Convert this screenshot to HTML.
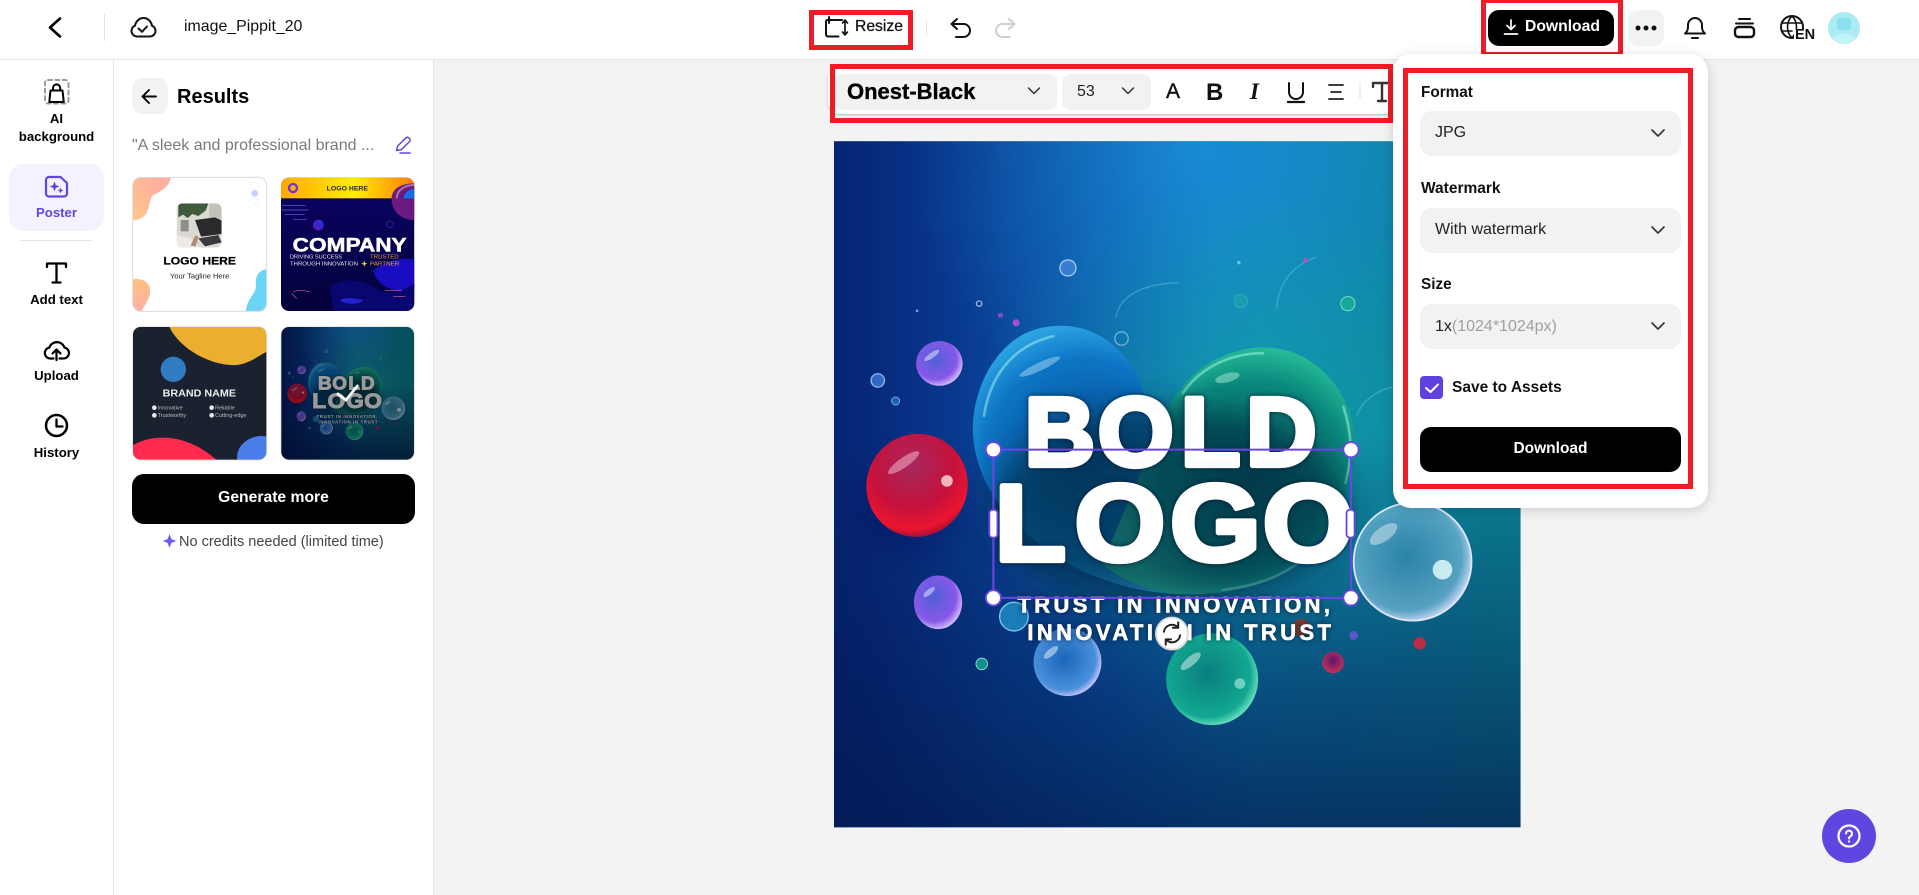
<!DOCTYPE html>
<html lang="en"><head><meta charset="utf-8"><title>image_Pippit_20</title>
<style>
html,body{margin:0;padding:0;width:1919px;height:895px;overflow:hidden;background:#f3f3f3;font-family:"Liberation Sans",sans-serif;color:#000}
.a{position:absolute}
.t{position:absolute;white-space:nowrap;line-height:20px;height:20px}
.c{text-align:center}
.b{font-weight:700}
svg{position:absolute;overflow:visible}
.sel{position:absolute;background:#f2f2f2;border-radius:12px}
.red{position:absolute;border:5px solid #ee1c25;box-sizing:border-box}
</style></head><body>

<!-- top bar -->
<div class="a" style="left:0;top:0;width:1919px;height:59px;background:#fff;border-bottom:1px solid #e4e4e4"></div>
<div class="a" style="left:0;top:60px;width:113px;height:835px;background:#fff;border-right:1px solid #e6e6e6"></div>
<div class="a" style="left:114px;top:60px;width:319px;height:835px;background:#fff;border-right:1px solid #e6e6e6"></div>

<div class="a" style="left:104px;top:14px;width:1px;height:27px;background:#e4e4e4"></div>
<div class="t" style="left:184px;top:17px;font-size:15.900px;color:#111">image_Pippit_20</div>
<div class="a" style="left:926px;top:20px;width:1px;height:15px;background:#e2e2e2"></div>

<div class="a" style="left:9px;top:164px;width:95px;height:67px;background:#f4f2fe;border-radius:14px"></div>

<svg style="left:0;top:0" width="1919" height="895" viewBox="0 0 1919 895" fill="none" stroke-linecap="round" stroke-linejoin="round">
  <!-- back -->
  <path d="M60 18.500 50 27.500 60 36.500" stroke="#000" stroke-width="2.600"/>
  <!-- cloud check -->
  <path d="M137 36.500a5.600 5.600 0 0 1-2-10.800c.8-4.300 4.200-7.700 8.500-7.700s7.700 3.400 8.500 7.700a5.600 5.600 0 0 1-2 10.800z" stroke="#111" stroke-width="2"/>
  <path d="M138.500 28.500l3.500 3.300 5-5.300" stroke="#111" stroke-width="2"/>
  <!-- AI bg -->
  <rect x="45" y="80" width="23.500" height="23.500" rx="3" stroke="#999" stroke-width="2" stroke-dasharray="4 3.400"/>
  <path d="M50.500 90.500h12l1.300 11.500H49.300z" stroke="#000" stroke-width="2"/>
  <path d="M53 90.500v-2.500a3.600 3.600 0 0 1 7.200 0v2.500" stroke="#000" stroke-width="2"/>
  <!-- poster -->
  <path d="M49 177h11.500l6.500 6v10.500a3 3 0 0 1-3 3H49a3 3 0 0 1-3-3V180a3 3 0 0 1 3-3z" stroke="#6046e0" stroke-width="2.200"/>
  <path d="M54.500 181.500l1.400 3.600 3.600 1.400-3.600 1.400-1.400 3.600-1.400-3.600-3.600-1.400 3.600-1.400z M60.500 187.500l.9 2.100 2.100.9-2.100.9-.9 2.100-.9-2.100-2.100-.9 2.100-.9z" fill="#6046e0"/>
  <!-- T -->
  <path d="M47 267v-3.500h19v3.500M56.500 263.500v19M52.500 282.500h8" stroke="#000" stroke-width="2.300"/>
  <!-- upload -->
  <path d="M50.500 358.500a5.500 5.500 0 0 1-1.200-10.900 8 8 0 0 1 15.200 0 5.500 5.500 0 0 1-.9 10.900M56.500 360v-10M52.500 353.500l4-4 4 4" stroke="#000" stroke-width="2.200"/>
  <path d="M50.500 358.500h3M59.500 358.500h3" stroke="#000" stroke-width="2.200"/>
  <!-- history -->
  <circle cx="56.500" cy="425.500" r="10.500" stroke="#000" stroke-width="2.500"/>
  <path d="M56.500 419.500v7h6" stroke="#000" stroke-width="2.300"/>
  <!-- results back arrow -->
  <rect x="132" y="78" width="36" height="36" rx="10" fill="#f2f2f2"/>
  <path d="M156 96.500h-13.500M149 90l-6.500 6.500 6.500 6.500" stroke="#000" stroke-width="1.900"/>
  <!-- edit -->
  <path d="M396.500 150.500l1.200-4.500 8-8c1.500-1.300 3-.3 3.600.3s1.300 2 .1 3.300l-8 8z" stroke="#6046e0" stroke-width="1.500"/>
  <path d="M400 153h10" stroke="#6046e0" stroke-width="1.500"/>
  <!-- star -->
  <path d="M169.500 534l1.800 5 5 2-5 2-1.800 5-1.800-5-5-2 5-2z" fill="#6a5cf5"/>
  <!-- resize -->
  <path d="M829 20h-1.500a1.500 1.500 0 0 0-1.500 1.500v13a2 2 0 0 0 2 2h10.500M829 17v6M829 20h13" stroke="#111" stroke-width="2"/>
  <path d="M845 21v13M842.500 23l2.500-3 2.500 3M842.500 32l2.500 3 2.500-3" stroke="#111" stroke-width="1.700"/>
  <!-- undo / redo -->
  <path d="M957 19l-5.500 5 5.500 5M952 24h11.500a6.500 6.500 0 0 1 0 13H956" stroke="#111" stroke-width="2"/>
  <path d="M1009 19l5.500 5-5.500 5M1014 24h-11.500a6.500 6.500 0 0 0 0 13h7.500" stroke="#cfcfcf" stroke-width="2"/>
</svg>

<!-- sidebar labels -->
<div class="a" style="left:20px;top:240px;width:72px;height:1px;background:#e4e4e4"></div>
<div class="t b c" style="left:0;width:113px;top:109px;font-size:13.200px">AI</div>
<div class="t b c" style="left:0;width:113px;top:127px;font-size:13.200px">background</div>
<div class="t b c" style="left:0;width:113px;top:203px;font-size:13.200px;color:#6046e0">Poster</div>
<div class="t b c" style="left:0;width:113px;top:290px;font-size:13.200px">Add text</div>
<div class="t b c" style="left:0;width:113px;top:366px;font-size:13.200px">Upload</div>
<div class="t b c" style="left:0;width:113px;top:443px;font-size:13.200px">History</div>

<!-- panel -->
<div class="t b" style="left:177px;top:87px;font-size:20px">Results</div>
<div class="t" style="left:132px;top:136px;font-size:16px;color:#7a7a7a">"A sleek and professional brand ...</div>

<!-- canvas -->
<svg style="left:830px;top:130px" width="700" height="700" viewBox="0 0 1568 1568" fill="none">
  <defs>
    <linearGradient id="bgL" x1="0" y1="0" x2="1" y2="0"><stop offset="0" stop-color="#0a359c"/><stop offset=".4" stop-color="#0c62b8"/><stop offset=".62" stop-color="#0e80b0"/><stop offset="1" stop-color="#0c8796"/></linearGradient>
    <linearGradient id="bgD" x1="0" y1="0" x2="0" y2="1"><stop offset=".42" stop-color="#031e50" stop-opacity="0"/><stop offset="1" stop-color="#031e50" stop-opacity=".78"/></linearGradient>
    <linearGradient id="bgE" x1="0" y1="0" x2="1" y2="0"><stop offset="0" stop-color="#02124e" stop-opacity=".5"/><stop offset=".25" stop-color="#02124e" stop-opacity=".2"/><stop offset=".55" stop-color="#02124e" stop-opacity="0"/></linearGradient>
    <radialGradient id="bgT" gradientUnits="userSpaceOnUse" cx="800" cy="30" r="640"><stop offset="0" stop-color="#1c90de" stop-opacity=".85"/><stop offset="1" stop-color="#1c90de" stop-opacity="0"/></radialGradient>
    <radialGradient id="bgC" gradientUnits="userSpaceOnUse" cx="900" cy="720" r="600"><stop offset="0" stop-color="#14b0a4" stop-opacity=".65"/><stop offset="1" stop-color="#14b0a4" stop-opacity="0"/></radialGradient>
    <radialGradient id="hB" gradientUnits="userSpaceOnUse" cx="570" cy="740" r="330"><stop offset="0" stop-color="#044a8c"/><stop offset=".68" stop-color="#0c74c4"/><stop offset="1" stop-color="#34b0ec"/></radialGradient>
    <radialGradient id="hG" gradientUnits="userSpaceOnUse" cx="950" cy="780" r="320"><stop offset="0" stop-color="#04585a"/><stop offset=".68" stop-color="#0a8a7e"/><stop offset="1" stop-color="#2fcca0"/></radialGradient>
    <radialGradient id="rd" cx=".38" cy=".35" r=".72"><stop offset="0" stop-color="#a8285e"/><stop offset=".55" stop-color="#c4123c"/><stop offset=".85" stop-color="#ec1430"/><stop offset="1" stop-color="#8a1032"/></radialGradient>
    <radialGradient id="pu" cx=".42" cy=".4" r=".65"><stop offset="0" stop-color="#4f60d8"/><stop offset=".7" stop-color="#8858e8"/><stop offset="1" stop-color="#e0d0ff"/></radialGradient>
    <radialGradient id="gl" cx=".45" cy=".45" r=".58"><stop offset="0" stop-color="#358ab0" stop-opacity=".75"/><stop offset=".8" stop-color="#6ab0d0" stop-opacity=".8"/><stop offset="1" stop-color="#d8e0ff"/></radialGradient>
    <radialGradient id="tl" cx=".45" cy=".45" r=".58"><stop offset="0" stop-color="#0a7e80"/><stop offset=".8" stop-color="#12a890"/><stop offset="1" stop-color="#70e8c4"/></radialGradient>
    <radialGradient id="bl" cx=".45" cy=".45" r=".58"><stop offset="0" stop-color="#1a66b8"/><stop offset=".8" stop-color="#4a90dc"/><stop offset="1" stop-color="#d8c8ff"/></radialGradient>
    <radialGradient id="mr" cx=".5" cy=".4" r=".6"><stop offset="0" stop-color="#5a1a6a"/><stop offset="1" stop-color="#c8305a"/></radialGradient>
    <linearGradient id="tw" x1="0" y1="0" x2="0" y2="1"><stop offset=".75" stop-color="#fff"/><stop offset="1" stop-color="#d8d8d8"/></linearGradient>
    <filter id="sh" x="-30%" y="-30%" width="160%" height="160%"><feGaussianBlur stdDeviation="35"/></filter>
    <clipPath id="cvclip"><rect x="9" y="25" width="1538" height="1537"/></clipPath>
  </defs>
  <g clip-path="url(#cvclip)">
  <g id="bubs">
    <rect x="9" y="25" width="1538" height="1537" fill="url(#bgL)"/>
    <rect x="9" y="25" width="1538" height="1537" fill="url(#bgT)"/>
    <rect x="9" y="25" width="1538" height="1537" fill="url(#bgC)"/>
    <rect x="9" y="25" width="1538" height="1537" fill="url(#bgD)"/>
    <rect x="9" y="25" width="1538" height="1537" fill="url(#bgE)"/>
    <!-- faint outlines -->
    <path d="M640 420C650 370 700 345 780 342M1000 400C1005 340 1040 300 1090 285M1180 640C1190 610 1220 585 1262 575" stroke="#8fd8e8" stroke-opacity=".35" stroke-width="3"/>
    <!-- heart -->
    <path d="M700 580C660 470 570 425 480 442 390 455 320 560 320 670c2 120 80 210 180 280 90 60 200 90 300 90z" fill="url(#hB)"/>
    <path d="M755 630C800 530 900 480 990 488c100 8 180 102 185 202 5 110-55 210-145 290-70 50-160 60-230 60-70 0-150-30-190-70z" fill="url(#hG)"/>
    <path d="M345 640C360 540 420 480 500 462M790 590c40-60 110-90 180-90M1150 620c20 60 20 110 5 170M880 1030c90-10 160-40 210-100" stroke="#b8fff0" stroke-opacity=".45" stroke-width="6" stroke-linecap="round"/>
    <ellipse cx="470" cy="530" rx="50" ry="9" transform="rotate(-25 470 530)" fill="#cfefff" fill-opacity=".4"/>
    <ellipse cx="890" cy="555" rx="28" ry="10" transform="rotate(-15 890 555)" fill="#d0fff0" fill-opacity=".4"/>
    <ellipse cx="760" cy="840" rx="400" ry="220" fill="#012a44" fill-opacity=".65" filter="url(#sh)"/>
    <!-- shapes -->
    <ellipse cx="175" cy="850" rx="110" ry="100" fill="#02154a" fill-opacity=".25" filter="url(#sh)"/>
    <ellipse cx="195" cy="796" rx="113" ry="116" transform="rotate(25 195 796)" fill="url(#rd)"/>
    <ellipse cx="165" cy="745" rx="42" ry="11" transform="rotate(-35 165 745)" fill="#ffd0e0" fill-opacity=".45"/>
    <circle cx="262" cy="786" r="13" fill="#ffe0e0" fill-opacity=".8"/>
    <ellipse cx="245" cy="523" rx="52" ry="50" fill="url(#pu)"/>
    <ellipse cx="228" cy="505" rx="20" ry="6" transform="rotate(-35 228 505)" fill="#fff" fill-opacity=".45"/>
    <ellipse cx="242" cy="1058" rx="54" ry="60" fill="url(#pu)"/>
    <ellipse cx="222" cy="1035" rx="16" ry="6" transform="rotate(-40 222 1035)" fill="#fff" fill-opacity=".45"/>
    <circle cx="1305" cy="967" r="132" fill="url(#gl)" stroke="#dfe6ff" stroke-width="4"/>
    <ellipse cx="1240" cy="905" rx="36" ry="16" transform="rotate(-35 1240 905)" fill="#fff" fill-opacity=".4"/>
    <circle cx="1372" cy="985" r="22" fill="#e8ffff" fill-opacity=".8"/>
    <circle cx="532" cy="1192" r="76" fill="url(#bl)"/>
    <ellipse cx="495" cy="1170" rx="20" ry="8" transform="rotate(-40 495 1170)" fill="#fff" fill-opacity=".45"/>
    <circle cx="856" cy="1230" r="103" fill="url(#tl)"/>
    <ellipse cx="808" cy="1190" rx="28" ry="10" transform="rotate(-40 808 1190)" fill="#fff" fill-opacity=".45"/>
    <circle cx="918" cy="1240" r="12" fill="#cffff0" fill-opacity=".5"/>
    <circle cx="412" cy="1090" r="32" fill="#1a7cb8" stroke="#7cc8ec" stroke-width="3"/>
    <circle cx="533" cy="309" r="18" fill="#3a7cd0" stroke="#a0c8f0" stroke-width="3"/>
    <circle cx="107" cy="561" r="15" fill="#2f68c4" stroke="#8cb8e8" stroke-width="3"/>
    <circle cx="147" cy="607" r="9" fill="#1a60b4" stroke="#7cb0dc" stroke-width="2"/>
    <circle cx="334" cy="389" r="6" stroke="#98b8e0" stroke-width="3"/>
    <circle cx="382" cy="415" r="6" fill="#7850c0"/>
    <circle cx="417" cy="432" r="8" fill="#a050d0"/>
    <circle cx="195" cy="405" r="3" fill="#80a0d8"/>
    <circle cx="916" cy="297" r="4" fill="#60c8e0"/>
    <circle cx="1065" cy="292" r="6" fill="#a05cb8"/>
    <circle cx="920" cy="383" r="15" fill="#1a9cb0" stroke="#30b0bc" stroke-width="2"/>
    <circle cx="1160" cy="389" r="16" fill="#18a898" stroke="#90e0d0" stroke-width="2"/>
    <circle cx="653" cy="467" r="15" stroke="#90d0e4" stroke-opacity=".7" stroke-width="3"/>
    <circle cx="340" cy="1196" r="13" fill="#16908c" stroke="#90dcd8" stroke-width="2"/>
    <circle cx="1127" cy="1193" r="24" fill="url(#mr)"/>
    <circle cx="1173" cy="1132" r="10" fill="#5858c8"/>
    <circle cx="1321" cy="1150" r="14" fill="#b82c44"/>
    <circle cx="1055" cy="1115" r="20" fill="#7a3c30"/>
  </g>
  <g style="filter:drop-shadow(0 0 6px rgba(0,20,50,.85))" font-family="Liberation Sans" font-weight="700">
    <text x="436 600 786 932" y="751" font-size="218" fill="url(#tw)" stroke="#fff" stroke-width="12" stroke-linejoin="round">BOLD</text>
    <g transform="scale(1.07 1)">
      <text x="345 512 712 906" y="964" font-size="244" fill="#fff" stroke="#fff" stroke-width="12" stroke-linejoin="round">LOGO</text>
    </g>
    <text x="420" y="1081" font-size="49" fill="#fff" stroke="#fff" stroke-width="1.500" textLength="700">TRUST IN INNOVATION,</text>
    <text x="442" y="1142" font-size="49" fill="#fff" stroke="#fff" stroke-width="1.500" textLength="680">INNOVATION IN TRUST</text>
  </g>
  </g>
  <!-- selection -->
  <rect x="366" y="716" width="801" height="332" stroke="#6a46e4" stroke-width="4.500"/>
  <g fill="#fff" stroke="#6a46e4" stroke-width="4">
    <circle cx="366" cy="716" r="17"/><circle cx="1167" cy="716" r="17"/><circle cx="366" cy="1048" r="17"/><circle cx="1167" cy="1048" r="17"/>
    <rect x="357" y="851" width="18" height="62" rx="7"/><rect x="1157" y="851" width="18" height="62" rx="7"/>
  </g>
  <circle cx="766" cy="1128" r="36" fill="#fff" stroke="#d8d8d8" stroke-width="4"/>
  <g stroke="#222" stroke-width="4.500" stroke-linecap="round" stroke-linejoin="round">
    <path d="M748 1124a18 18 0 0 1 31-10M784 1132a18 18 0 0 1-31 10"/>
    <path d="M780 1103v12h-12M752 1153v-12h12"/>
  </g>
</svg>

<!-- thumbnails -->
<svg style="left:120px;top:170px" width="300" height="300" viewBox="0 0 900 900" fill="none" font-family="Liberation Sans">
  <defs>
    <clipPath id="c1"><rect x="38" y="22" width="402" height="402" rx="24"/></clipPath>
    <clipPath id="c2"><rect x="483" y="23" width="400" height="400" rx="24"/></clipPath>
    <clipPath id="c3"><rect x="38" y="470" width="402" height="400" rx="24"/></clipPath>
    <clipPath id="c4"><rect x="483" y="470" width="400" height="400" rx="24"/></clipPath>
    <clipPath id="cp"><rect x="170" y="100" width="135" height="133" rx="18"/></clipPath>
    <linearGradient id="o1" x1="0" y1="1" x2="1" y2="0"><stop offset="0" stop-color="#ffc78a"/><stop offset="1" stop-color="#ffa9a4"/></linearGradient>
    <linearGradient id="o2" x1="0" y1="0" x2="0" y2="1"><stop offset="0" stop-color="#ffc080"/><stop offset="1" stop-color="#ffb0a8"/></linearGradient>
    <linearGradient id="yb" x1="0" y1="0" x2="1" y2="0"><stop offset="0" stop-color="#ffa800"/><stop offset=".55" stop-color="#ffee00"/><stop offset="1" stop-color="#ff7a00"/></linearGradient>
    <linearGradient id="nv" x1="0" y1="0" x2="0" y2="1"><stop offset="0" stop-color="#0a0466"/><stop offset="1" stop-color="#04013a"/></linearGradient>
  </defs>
  <!-- T1 -->
  <rect x="38" y="22" width="402" height="402" rx="24" fill="#fff"/>
  <g clip-path="url(#c1)">
    <path d="M38 22H152C150 50 120 65 100 75 85 90 90 125 70 140 60 148 50 150 38 152z" fill="url(#o1)"/>
    <path d="M38 328C70 322 95 340 90 370 85 395 70 410 65 424H38z" fill="url(#o2)"/>
    <path d="M440 298C415 300 405 320 408 345 410 370 380 385 378 424H440z" fill="#6cd4f4"/>
    <circle cx="404" cy="70" r="10" fill="#c5d0fb"/>
    <circle cx="404" cy="46" r="10" stroke="#eef0fb" stroke-width="2"/><circle cx="404" cy="92" r="10" stroke="#eef0fb" stroke-width="2"/>
    <g clip-path="url(#cp)">
      <rect x="170" y="100" width="135" height="133" fill="#dcd8d2"/>
      <rect x="268" y="100" width="37" height="60" fill="#c4c0ba"/>
      <path d="M175 100h90l-8 22-22 16-18-6-14 12-14-10-14 8z" fill="#3f5a3c"/>
      <rect x="182" y="150" width="24" height="34" fill="#8e8e8c"/>
      <path d="M225 150l60-8 20 10v40l-62 8z" fill="#2a2a2c"/>
      <path d="M170 196l40 8 30 29h-70z" fill="#ecebe8"/>
      <path d="M212 226l14-30 9 4-8 30z" fill="#b08a72"/>
      <path d="M235 205l60-10 10 22-50 12z" fill="#3a3a3c"/>
    </g>
    <text x="130" y="283" font-size="34" font-weight="700" fill="#000" stroke="#000" stroke-width=".8" textLength="218" lengthAdjust="spacingAndGlyphs">LOGO HERE</text>
    <text x="239" y="325" font-size="22.500" fill="#222" text-anchor="middle">Your Tagline Here</text>
  </g>
  <rect x="38" y="22" width="402" height="402" rx="24" stroke="#dcdcdc" stroke-width="3"/>
  <!-- T2 -->
  <g clip-path="url(#c2)">
    <rect x="483" y="23" width="400" height="400" fill="url(#nv)"/>
    <path d="M760 300C840 250 883 270 883 270V360C820 370 770 350 760 300z" fill="#1a0cc0"/>
    <path d="M630 350c40-30 100-20 130 0 30 20 60 30 123-10v83H640z" fill="#0a0670"/>
    <path d="M660 390c20-10 50-5 70 0-10 15-60 15-70 0z" fill="#2222d0"/>
    <circle cx="595" cy="165" r="16" fill="#5020c0"/><circle cx="601" cy="160" r="9" fill="#2030e0"/>
    <circle cx="810" cy="163" r="10" stroke="#2838b0" stroke-width="2"/>
    <rect x="483" y="23" width="400" height="62" fill="url(#yb)"/>
    <circle cx="519" cy="54" r="12" stroke="#7030e0" stroke-width="7"/>
    <path d="M815 85c0-30 30-45 68-45v110c-40 0-68-25-68-65z" fill="#6a1a80"/>
    <path d="M850 85c5-20 20-28 33-28v28z" fill="#1470e8"/>
    <path d="M830 85c0-25 25-40 53-40" stroke="#f0d0c0" stroke-opacity=".5" stroke-width="6"/>
    <path d="M486 107h70M486 120h80M494 133h60M520 148h40" stroke="#7060e0" stroke-width="2"/>
    <path d="M520 365c15-5 25-5 50 0M515 370l15 15M795 362h50M820 380h35" stroke="#e060a0" stroke-width="2"/>
    <text x="682" y="61" font-size="19" font-weight="700" fill="#222" text-anchor="middle" textLength="124" lengthAdjust="spacingAndGlyphs">LOGO HERE</text>
    <text x="518" y="245" font-size="57" font-weight="700" fill="#fff" stroke="#fff" stroke-width="1.500" textLength="342" lengthAdjust="spacingAndGlyphs">COMPANY</text>
    <text x="510" y="266" font-size="16" fill="#e8e8f0" textLength="156" lengthAdjust="spacingAndGlyphs">DRIVING SUCCESS</text>
    <text x="510" y="287" font-size="16" fill="#e8e8f0" textLength="204" lengthAdjust="spacingAndGlyphs">THROUGH INNOVATION</text>
    <text x="750" y="266" font-size="16" fill="#e8a040" textLength="86" lengthAdjust="spacingAndGlyphs">TRUSTED</text>
    <text x="750" y="287" font-size="16" fill="#e8a040" textLength="88" lengthAdjust="spacingAndGlyphs">PARTNER</text>
    <path d="M733 272l2.500 6.500 6.500 2.500-6.500 2.500-2.500 6.500-2.500-6.500-6.500-2.500 6.500-2.500z" fill="#f8d020"/>
  </g>
  <!-- T3 -->
  <g clip-path="url(#c3)">
    <rect x="38" y="470" width="402" height="400" fill="#1a2230"/>
    <path d="M148 470C180 540 280 590 350 585 390 580 420 555 440 545V470z" fill="#ebaf30"/>
    <circle cx="160" cy="598" r="38" fill="#2f7cc0"/>
    <path d="M38 826C100 790 200 790 290 870H38z" fill="#ff2a4d"/>
    <path d="M352 870C345 820 400 790 440 800V870z" fill="#4a7de8"/>
    <text x="238" y="680" font-size="31" font-weight="700" fill="#eee" text-anchor="middle" textLength="220" lengthAdjust="spacingAndGlyphs">BRAND NAME</text>
    <g fill="#e8e8e8"><circle cx="103" cy="713" r="7"/><circle cx="103" cy="736" r="7"/><circle cx="275" cy="713" r="7"/><circle cx="275" cy="736" r="7"/></g>
    <g font-size="16.500" fill="#b8bcc4">
      <text x="113" y="718">Innovative</text><text x="113" y="741">Trustworthy</text>
      <text x="285" y="718">Reliable</text><text x="285" y="741">Cutting-edge</text>
    </g>
  </g>
  <rect x="38" y="470" width="402" height="400" rx="24" stroke="#dcdcdc" stroke-width="2"/>
  <!-- T4 -->
  <g clip-path="url(#c4)">
    <g transform="translate(480.660 463.500) scale(.26)">
      <use href="#bubs"/>
      <g style="filter:drop-shadow(0 0 6px rgba(0,20,50,.85))" font-weight="700">
        <text x="436 600 786 932" y="751" font-size="218" fill="#fff" stroke="#fff" stroke-width="12">BOLD</text>
        <g transform="scale(1.07 1)"><text x="345 512 712 906" y="964" font-size="244" fill="#fff" stroke="#fff" stroke-width="12">LOGO</text></g>
        <text x="420" y="1081" font-size="49" fill="#fff" textLength="700">TRUST IN INNOVATION,</text>
        <text x="442" y="1142" font-size="49" fill="#fff" textLength="680">INNOVATION IN TRUST</text>
      </g>
    </g>
    <rect x="483" y="470" width="400" height="400" fill="#000" fill-opacity=".4"/>
    <path d="M654 672l24 18 34-42" stroke="#fff" stroke-width="8" stroke-linecap="square"/>
  </g>
  <rect x="483" y="470" width="400" height="400" rx="24" stroke="#dcdcdc" stroke-width="2"/>
</svg>

<div class="a c" style="left:132px;top:474px;width:283px;height:50px;background:#000;border-radius:12px"></div>
<div class="t b c" style="left:132px;top:488px;width:283px;color:#fff;font-size:15.700px">Generate more</div>
<div class="t" style="left:179px;top:532px;font-size:14.500px;color:#444">No credits needed (limited time)</div>

<!-- top labels -->
<div class="t" style="left:855px;top:17px;font-size:15.700px;color:#111;-webkit-text-stroke:.25px #111">Resize</div>
<div class="red" style="left:809px;top:10px;width:104px;height:40px"></div>

<!-- toolbar -->
<div class="a" style="left:828px;top:66px;width:566px;height:48px;background:#fff;border-radius:12px 0 0 12px;box-shadow:0 1px 2px rgba(0,0,0,.25)"></div>
<div class="sel" style="left:835px;top:74px;width:222px;height:36px;border-radius:8px"></div>
<div class="sel" style="left:1062px;top:74px;width:89px;height:36px;border-radius:8px"></div>
<div class="t b" style="left:847px;top:82px;font-size:22px;-webkit-text-stroke:.35px #000">Onest-Black</div>
<div class="t" style="left:1077px;top:82px;font-size:16px;color:#222">53</div>
<div class="t" style="left:1166px;top:82px;font-size:21px;color:#111;-webkit-text-stroke:.4px #111">A</div>
<div class="t b" style="left:1206px;top:83px;font-size:24px;color:#111">B</div>
<div class="t b" style="left:1250px;top:82px;font-size:23px;color:#111;font-family:'Liberation Serif',serif;font-style:italic">I</div>
<svg style="left:0;top:0" width="1919" height="895" viewBox="0 0 1919 895" fill="none" stroke-linecap="round" stroke-linejoin="round">
  <path d="M1028.500 88l5.500 5.500 5.500-5.500M1122.500 88l5.500 5.500 5.500-5.500" stroke="#333" stroke-width="1.500"/>
  <path d="M1289 83v9a7 7 0 0 0 14 0v-9" stroke="#111" stroke-width="2"/>
  <path d="M1288 102h16" stroke="#111" stroke-width="2.300"/>
  <path d="M1329 85h14M1331 92h10M1329 99h14" stroke="#222" stroke-width="1.800"/>
  <path d="M1360 83v17" stroke="#e4e4e4" stroke-width="1"/>
  <path d="M1373 87v-4h18v4M1382 83v18M1378 101h8" stroke="#333" stroke-width="2.400"/>
</svg>
<div class="red" style="left:830px;top:64px;width:563px;height:59px"></div>

<!-- download top -->
<div class="red" style="left:1481px;top:-2px;width:142px;height:59px"></div>
<div class="a" style="left:1488px;top:10px;width:126px;height:36px;background:#000;border-radius:11px"></div>
<div class="t b" style="left:1525px;top:17px;font-size:15.700px;color:#fff">Download</div>
<div class="a" style="left:1628px;top:10px;width:36px;height:36px;background:#f2f2f2;border-radius:10px"></div>
<svg style="left:0;top:0" width="1919" height="895" viewBox="0 0 1919 895" fill="none" stroke-linecap="round" stroke-linejoin="round">
  <path d="M1511 20v9M1507 25.500l4 4 4-4M1504.500 34h13" stroke="#fff" stroke-width="1.700"/>
  <circle cx="1638" cy="28" r="2.500" fill="#111"/><circle cx="1646" cy="28" r="2.500" fill="#111"/><circle cx="1654" cy="28" r="2.500" fill="#111"/>
  <path d="M1685 33.500c2-1.500 3-3 3-6.500v-2a7 7 0 0 1 14 0v2c0 3.500 1 5 3 6.500z" stroke="#111" stroke-width="2"/>
  <path d="M1692 38h6" stroke="#111" stroke-width="2"/>
  <path d="M1739 19h11M1736 23.500h17" stroke="#111" stroke-width="2"/>
  <rect x="1735" y="27" width="19" height="10" rx="3.500" stroke="#111" stroke-width="2.400"/>
  <circle cx="1792" cy="27" r="11" stroke="#111" stroke-width="2"/>
  <path d="M1792 16c-6 6-6 16 0 22M1792 16c6 6 6 16 0 22M1782 23h20M1782 31h10" stroke="#111" stroke-width="1.600"/>
  <circle cx="1844" cy="28" r="16" fill="#abecf4"/>
  <rect x="1837" y="18" width="14" height="12" rx="3" fill="#8ae2f0"/>
  <path d="M1832 38.500c3-6 20-6 24 0a16 16 0 0 1-24 0z" fill="#c2f2f6"/>
</svg>
<div class="a" style="left:1794px;top:30px;width:21px;height:11px;background:#fff"></div>
<div class="t b" style="left:1795px;top:25px;font-size:14.500px;color:#111">EN</div>

<!-- popup -->
<div class="a" style="left:1393px;top:54px;width:315px;height:454px;background:#fff;border-radius:18px;box-shadow:0 2px 12px rgba(0,0,0,.16);"></div>
<div class="red" style="left:1403px;top:68px;width:290px;height:421px"></div>
<div class="t b" style="left:1421px;top:83px;font-size:15.300px;color:#111">Format</div>
<div class="sel" style="left:1420px;top:111px;width:261px;height:45px"></div>
<div class="t" style="left:1435px;top:123px;font-size:16px;color:#222">JPG</div>
<div class="t b" style="left:1421px;top:179px;font-size:15.500px;color:#111">Watermark</div>
<div class="sel" style="left:1420px;top:208px;width:261px;height:45px"></div>
<div class="t" style="left:1435px;top:220px;font-size:16px;color:#222">With watermark</div>
<div class="t b" style="left:1421px;top:275px;font-size:15.300px;color:#111">Size</div>
<div class="sel" style="left:1420px;top:304px;width:261px;height:45px"></div>
<div class="t" style="left:1435px;top:317px;font-size:16px;color:#a0a0a0"><span style="color:#222">1x</span>(1024*1024px)</div>
<div class="a" style="left:1420px;top:376px;width:23px;height:23px;background:#5f41df;border-radius:4px"></div>
<div class="t b" style="left:1452px;top:378px;font-size:15.500px;color:#111">Save to Assets</div>
<div class="a" style="left:1420px;top:427px;width:261px;height:45px;background:#000;border-radius:11px"></div>
<div class="t b c" style="left:1420px;top:439px;width:261px;font-size:15.500px;color:#fff">Download</div>
<svg style="left:0;top:0" width="1919" height="895" viewBox="0 0 1919 895" fill="none" stroke-linecap="round" stroke-linejoin="round">
  <path d="M1652 130l6 6 6-6M1652 227l6 6 6-6M1652 323l6 6 6-6" stroke="#333" stroke-width="1.600"/>
  <path d="M1426 388l4.500 4 7.500-7.500" stroke="#fff" stroke-width="2"/>
  <circle cx="1849" cy="836" r="27" fill="#6046e0"/>
  <circle cx="1849" cy="836" r="10.500" stroke="#fff" stroke-width="2.200"/>
  <path d="M1846 833.500a3 3 0 1 1 4.500 2.800c-1 .6-1.500 1.100-1.500 2.200" stroke="#fff" stroke-width="2"/>
  <circle cx="1849" cy="841.500" r="1.100" fill="#fff"/>
</svg>
</body></html>
